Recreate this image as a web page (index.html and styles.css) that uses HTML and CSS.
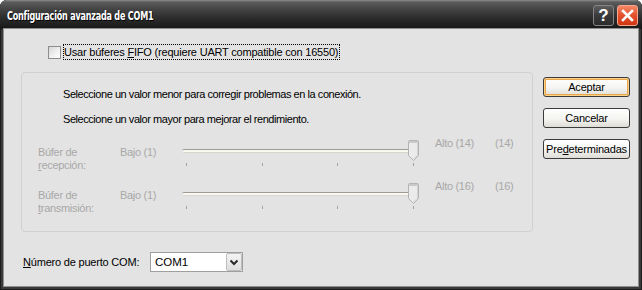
FILE: index.html
```html
<!DOCTYPE html>
<html lang="es">
<head>
<meta charset="utf-8">
<title>Configuración avanzada de COM1</title>
<link rel="stylesheet" href="styles.css">
</head>
<body>
<div class="window">
  <div class="titlebar">
    <span class="title-wrap"><span class="title">Configuración avanzada de COM1</span></span>
    <div class="tb-buttons">
      <div class="tb-btn help">?</div>
      <div class="tb-btn close">
        <svg width="19" height="19" viewBox="0 0 19 19"><path d="M5 5 L14 14 M14 5 L5 14" stroke="#fff" stroke-width="2.6" stroke-linecap="square"/></svg>
      </div>
    </div>
  </div>
  <div class="client">
    <div class="main">
      <div class="fifo">
        <span class="checkbox"></span>
        <span class="focus">Usar búferes <u>F</u>IFO (requiere UART compatible con 16550)</span>
      </div>
      <div class="group">
        <p class="hint">Seleccione un valor menor para corregir problemas en la conexión.</p>
        <p class="hint second">Seleccione un valor mayor para mejorar el rendimiento.</p>
        <div class="slider-row first">
          <div class="lbl">Búfer de<br><u>r</u>ecepción:</div>
          <div class="low">Bajo (1)</div>
          <div class="slider">
            <div class="track"></div>
            <div class="ticks"><i></i><i></i><i></i><i></i></div>
            <svg class="thumb" width="11" height="21" viewBox="0 0 11 21"><path d="M1.5 0.5 H9.5 Q10.5 0.5 10.5 1.5 V15.5 L5.5 20.5 L0.5 15.5 V1.5 Q0.5 0.5 1.5 0.5 Z" fill="#ebebeb" stroke="#b3b3b3"/><rect x="1" y="1" width="9" height="2" fill="#c9c9c9"/><path d="M9.5 3 V15 L5.5 19" fill="none" stroke="#d2d2d2"/></svg>
          </div>
          <div class="high">Alto (14)</div>
          <div class="val">(14)</div>
        </div>
        <div class="slider-row">
          <div class="lbl">Búfer de<br><u>t</u>ransmisión:</div>
          <div class="low">Bajo (1)</div>
          <div class="slider">
            <div class="track"></div>
            <div class="ticks"><i></i><i></i><i></i><i></i></div>
            <svg class="thumb" width="11" height="21" viewBox="0 0 11 21"><path d="M1.5 0.5 H9.5 Q10.5 0.5 10.5 1.5 V15.5 L5.5 20.5 L0.5 15.5 V1.5 Q0.5 0.5 1.5 0.5 Z" fill="#ebebeb" stroke="#b3b3b3"/><rect x="1" y="1" width="9" height="2" fill="#c9c9c9"/><path d="M9.5 3 V15 L5.5 19" fill="none" stroke="#d2d2d2"/></svg>
          </div>
          <div class="high">Alto (16)</div>
          <div class="val">(16)</div>
        </div>
      </div>
      <div class="port">
        <span class="port-label"><u>N</u>úmero de puerto COM:</span>
        <div class="combo">
          <span class="combo-text">COM1</span>
          <span class="drop"><svg width="14" height="16" viewBox="0 0 14 16"><path d="M3.5 6.5 L7 10 L10.5 6.5" fill="none" stroke="#2a2a2a" stroke-width="2"/></svg></span>
        </div>
      </div>
    </div>
    <div class="buttons">
      <div class="btn default">Aceptar</div>
      <div class="btn">Cancelar</div>
      <div class="btn">Pre<u>d</u>eterminadas</div>
    </div>
  </div>
</div>
</body>
</html>
```
FILE: styles.css
```css
html, body {
  margin: 0;
  padding: 0;
  background: #ffffff;
}

.window {
  width: 642px;
  height: 290px;
  display: flex;
  flex-direction: column;
  background: #3a3a3a;
  border-radius: 7px 7px 0 0;
  box-shadow: inset 1px 0 0 #1c1c1c, inset -1px 0 0 #1c1c1c, inset 0 -1px 0 #1c1c1c;
  font-family: "Liberation Sans", Arial, sans-serif;
  font-size: 11px;
  color: #000;
}

.titlebar {
  height: 29px;
  flex: none;
  display: flex;
  align-items: center;
  padding: 0 4px 0 7px;
  border-radius: 7px 7px 0 0;
  background: linear-gradient(#8e8e8e 0, #5c5c5c 2px, #444 9px, #2a2a2a 19px, #171717 29px);
}

.title-wrap {
  flex: 1;
  margin-top: 2px;
}

.title {
  display: inline-block;
  color: #fff;
  font-family: "DejaVu Sans", "Liberation Sans", sans-serif;
  font-stretch: condensed;
  font-weight: bold;
  font-size: 12px;
  letter-spacing: -0.3px;
  text-shadow: 1px 1px 0 #000;
  transform: scaleX(0.75);
  transform-origin: left center;
}

.tb-buttons {
  display: flex;
  gap: 3px;
  margin-top: 1px;
}

.tb-btn {
  width: 21px;
  height: 21px;
  box-sizing: border-box;
  border-radius: 3px;
  display: flex;
  align-items: center;
  justify-content: center;
}

.help {
  background: linear-gradient(#5e5e5e, #3a3a3a 50%, #2c2c2c);
  border: 1px solid #858585;
  color: #fff;
  font-family: "Liberation Sans", Arial, sans-serif;
  font-weight: bold;
  font-size: 17px;
  line-height: 19px;
}

.close {
  background: linear-gradient(#f48866, #e55430 45%, #cf3512);
  border: 1px solid #f3a590;
}

.client {
  flex: 1;
  display: flex;
  margin: 0 4px 4px 4px;
  background: #e3e3e3;
  box-shadow: 0 0 0 1px #8f8f8f;
  padding: 15px 0 0 17px;
}

.main {
  width: 512px;
  display: flex;
  flex-direction: column;
}

.fifo {
  display: flex;
  align-items: center;
  height: 16px;
  margin-left: 27px;
}

.checkbox {
  width: 13px;
  height: 13px;
  box-sizing: border-box;
  border: 1px solid #8d8d8d;
  background: linear-gradient(135deg, #d6d6d6, #f2f2f2 60%, #fdfdfd);
  margin-right: 2px;
}

.focus {
  border: 1px dotted #000;
  line-height: 14px;
  padding-right: 1px;
  letter-spacing: -0.2px;
}

.group {
  margin-top: 12px;
  height: 160px;
  box-sizing: border-box;
  border: 1px solid #d0d0d0;
  border-radius: 4px;
  padding: 15px 0 0 16px;
}

.hint {
  margin: 0 0 0 25px;
  line-height: 13px;
  letter-spacing: -0.45px;
}

.hint.second {
  margin-top: 12px;
}

.slider-row {
  display: grid;
  grid-template-columns: 82px 60px 240px 75px 1fr;
  height: 43px;
  color: #a8a8a8;
}

.slider-row.first {
  margin-top: 13px;
}

.lbl, .low {
  margin-top: 7px;
  line-height: 13px;
  letter-spacing: -0.3px;
}

.high, .val {
  margin-top: -2px;
  line-height: 13px;
  letter-spacing: -0.3px;
}

.high {
  padding-left: 15px;
}

.slider {
  position: relative;
  height: 43px;
}

.track {
  margin: 10px 2px 0 2px;
  height: 4px;
  box-sizing: border-box;
  border-top: 1px solid #9d9c94;
  border-bottom: 1px solid #d8d7cf;
  background: #f8f7f0;
  border-radius: 2px 0 0 2px;
}

.ticks {
  display: flex;
  justify-content: space-between;
  padding: 0 6px;
  margin-top: 10px;
}

.ticks i {
  display: block;
  width: 1px;
  height: 3px;
  background: #a3a3a3;
}

.thumb {
  position: absolute;
  left: 228px;
  top: 1px;
}

.port {
  margin-top: 19px;
  margin-left: 2px;
  display: flex;
  align-items: center;
  height: 21px;
}

.port-label {
  width: 127px;
  letter-spacing: -0.2px;
}

.combo {
  width: 93px;
  height: 20px;
  box-sizing: border-box;
  border: 1px solid #9f9f9f;
  background: #fff;
  display: flex;
  align-items: center;
}

.combo-text {
  padding-left: 4px;
  flex: 1;
  font-size: 11.5px;
}

.drop {
  width: 16px;
  height: 18px;
  box-sizing: border-box;
  border: 1px solid #bdbdbd;
  border-radius: 2px;
  background: linear-gradient(#f4f4f4, #dedede);
  display: flex;
  align-items: center;
  justify-content: center;
}

.buttons {
  margin-left: 10px;
  width: 87px;
  padding-top: 33px;
  display: flex;
  flex-direction: column;
  gap: 11px;
}

.btn {
  height: 20px;
  box-sizing: border-box;
  border: 1px solid #3b3b3b;
  border-radius: 3px;
  background: linear-gradient(#ffffff, #f4f4f1 55%, #dedcd6);
  display: flex;
  align-items: center;
  justify-content: center;
  letter-spacing: -0.2px;
}

.btn.default {
  box-shadow: inset 0 0 0 1px #fbd28a, inset 0 0 0 2px #eaa648;
}
```
